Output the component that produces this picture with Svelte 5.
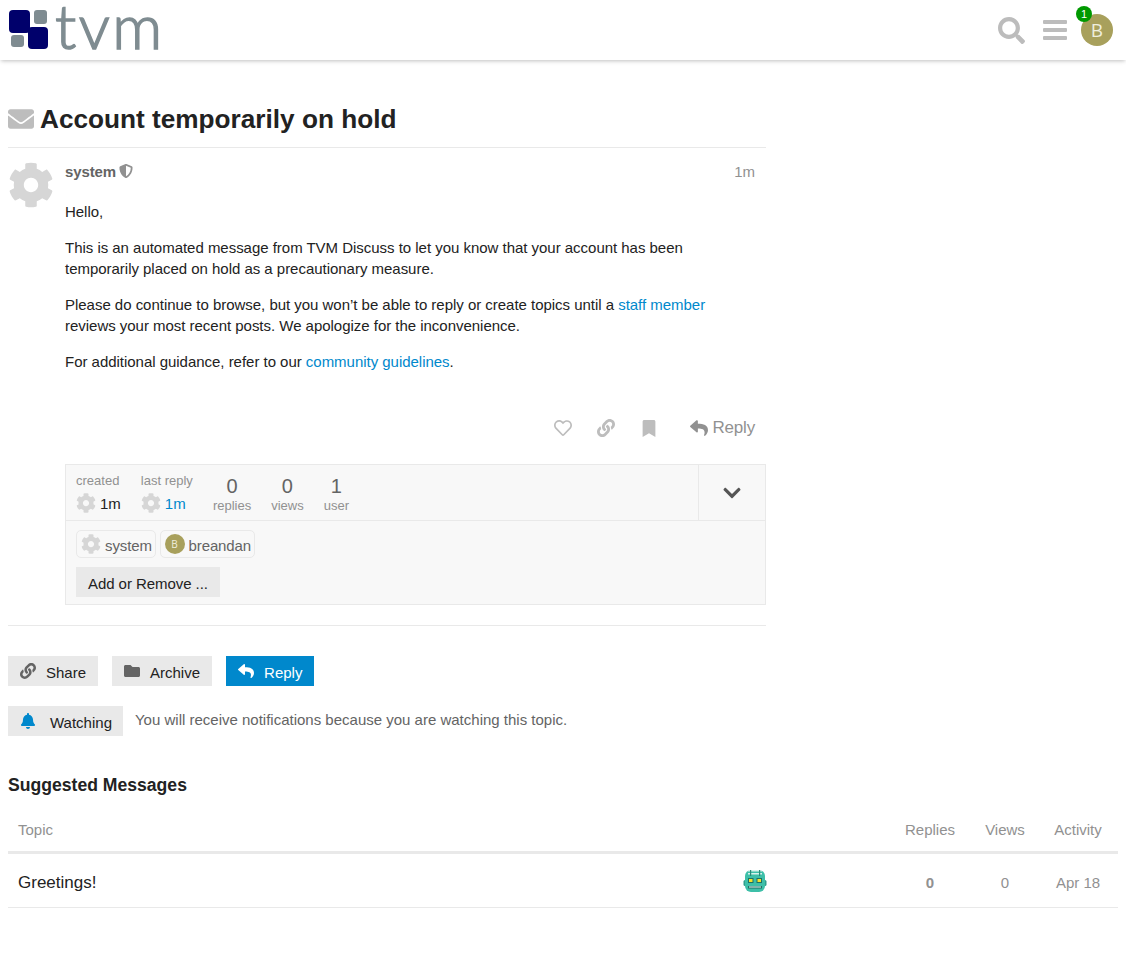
<script>
	const headers = ['Replies', 'Views', 'Activity'];
</script>

<svg class="defs" aria-hidden="true">
	<symbol id="cog" viewBox="0 0 512 512"><path d="M487.4 315.7l-42.6-24.6c4.3-23.2 4.3-47 0-70.2l42.6-24.6c4.9-2.8 7.1-8.6 5.5-14-11.1-35.6-30-67.8-54.7-94.6-3.8-4.1-10-5.1-14.8-2.3L380.8 110c-17.9-15.4-38.5-27.3-60.8-35.1V25.8c0-5.6-3.9-10.5-9.4-11.7-36.7-8.2-74.3-7.8-109.2 0-5.5 1.2-9.4 6.1-9.4 11.7V75c-22.2 7.9-42.8 19.8-60.8 35.1L88.7 85.5c-4.9-2.8-11-1.9-14.8 2.3-24.7 26.7-43.6 58.9-54.7 94.6-1.7 5.4.6 11.2 5.5 14L67.3 221c-4.3 23.2-4.3 47 0 70.2l-42.6 24.6c-4.9 2.8-7.1 8.6-5.5 14 11.1 35.6 30 67.8 54.7 94.6 3.8 4.1 10 5.1 14.8 2.3l42.6-24.6c17.9 15.4 38.5 27.3 60.8 35.1v49.2c0 5.6 3.9 10.5 9.4 11.7 36.7 8.2 74.3 7.8 109.2 0 5.5-1.2 9.4-6.1 9.4-11.7v-49.2c22.2-7.9 42.8-19.8 60.8-35.1l42.6 24.6c4.9 2.8 11 1.9 14.8-2.3 24.7-26.7 43.6-58.9 54.7-94.6 1.5-5.5-.7-11.3-5.6-14.1zM256 336c-44.1 0-80-35.9-80-80s35.9-80 80-80 80 35.9 80 80-35.9 80-80 80z"/></symbol>
	<symbol id="reply" viewBox="0 0 512 512"><path d="M8.309 189.836L184.313 37.851C199.719 24.546 224 35.347 224 56.015v80.053c160.629 1.839 288 34.032 288 186.258 0 61.441-39.581 122.309-83.333 154.132-13.653 9.931-33.111-2.533-28.077-18.631 45.344-145.012-21.507-183.51-176.59-185.742V360c0 20.7-24.3 31.453-39.687 18.164l-176.004-152c-11.071-9.562-11.086-26.753 0-36.328z"/></symbol>
	<symbol id="link" viewBox="0 0 512 512"><path d="M326.612 185.391c59.747 59.809 58.927 155.698.36 214.59-.11.12-.24.25-.36.37l-67.2 67.2c-59.27 59.27-155.699 59.262-214.96 0-59.27-59.26-59.27-155.7 0-214.96l37.106-37.106c9.84-9.84 26.786-3.3 27.294 10.606.648 17.722 3.826 35.527 9.69 52.721 1.986 5.822.567 12.262-3.783 16.612l-13.087 13.087c-28.026 28.026-28.905 73.66-1.155 101.96 28.024 28.579 74.086 28.749 102.325.51l67.2-67.19c28.191-28.191 28.073-73.757 0-101.83-3.701-3.694-7.429-6.564-10.341-8.569a16.037 16.037 0 0 1-6.947-12.606c-.396-10.567 3.348-21.456 11.698-29.806l21.054-21.055c5.521-5.521 14.182-6.199 20.584-1.731a152.482 152.482 0 0 1 20.522 17.197zM467.547 44.449c-59.261-59.262-155.69-59.27-214.96 0l-67.2 67.2c-.12.12-.25.25-.36.37-58.566 58.892-59.387 154.781.36 214.59a152.454 152.454 0 0 0 20.521 17.196c6.402 4.468 15.064 3.789 20.584-1.731l21.054-21.055c8.35-8.35 12.094-19.239 11.698-29.806a16.037 16.037 0 0 0-6.947-12.606c-2.912-2.005-6.64-4.875-10.341-8.569-28.073-28.073-28.191-73.639 0-101.83l67.2-67.19c28.239-28.239 74.3-28.069 102.325.51 27.75 28.3 26.872 73.934-1.155 101.96l-13.087 13.087c-4.35 4.35-5.769 10.79-3.783 16.612 5.864 17.194 9.042 34.999 9.69 52.721.509 13.906 17.454 20.446 27.294 10.606l37.106-37.106c59.271-59.259 59.271-155.699.001-214.959z"/></symbol>
</svg>

<header class="header">
	<a class="logo" href="#top">
		<svg class="logo-mark" viewBox="0 0 40 40" width="40" height="40">
			<rect x="0" y="0" width="21" height="23" rx="4" fill="#00006b"/>
			<rect x="25" y="0" width="13" height="14" rx="3" fill="#7f8c91"/>
			<rect x="2" y="25" width="13" height="12" rx="3" fill="#7f8c91"/>
			<rect x="19" y="17" width="20" height="22" rx="4" fill="#00006b"/>
		</svg>
		<span class="logo-text">tvm</span>
	</a>
	<div class="header-icons">
		<svg class="header-icon" viewBox="0 0 512 512"><path d="M505 442.7L405.3 343c-4.5-4.5-10.6-7-17-7H372c27.6-35.3 44-79.7 44-128C416 93.1 322.9 0 208 0S0 93.1 0 208s93.1 208 208 208c48.3 0 92.7-16.4 128-44v16.3c0 6.4 2.5 12.5 7 17l99.7 99.7c9.4 9.4 24.6 9.4 33.9 0l28.3-28.3c9.4-9.4 9.4-24.6.1-34zM208 336c-70.7 0-128-57.2-128-128 0-70.7 57.2-128 128-128 70.7 0 128 57.2 128 128 0 70.7-57.2 128-128 128z"/></svg>
		<svg class="header-icon bars" viewBox="0 0 24 20"><rect y="0" width="24" height="4" rx="1"/><rect y="8" width="24" height="4" rx="1"/><rect y="16" width="24" height="4" rx="1"/></svg>
		<div class="user">
			<span class="avatar-letter big">B</span>
			<span class="badge">1</span>
		</div>
	</div>
</header>

<main class="main">
	<h1 class="title">
		<svg class="title-icon" viewBox="0 64 512 384"><path d="M502.3 190.8c3.9-3.1 9.7-.2 9.7 4.7V400c0 26.5-21.5 48-48 48H48c-26.5 0-48-21.5-48-48V195.6c0-5 5.7-7.8 9.7-4.7 22.4 17.4 52.1 39.5 154.1 113.6 21.1 15.4 56.7 47.8 92.2 47.6 35.7.3 72-32.8 92.3-47.6 102-74.1 131.6-96.3 154-113.7zM256 320c23.2.4 56.6-29.2 73.4-41.4 132.7-96.3 142.8-104.7 173.4-128.7 5.8-4.5 9.2-11.5 9.2-18.9v-19c0-26.5-21.5-48-48-48H48C21.5 64 0 85.5 0 112v19c0 7.4 3.4 14.3 9.2 18.9 30.6 23.9 40.7 32.4 173.4 128.7 16.8 12.2 50.2 41.8 73.4 41.4z"/></svg>
		Account temporarily on hold
	</h1>

	<article class="post">
		<svg class="post-avatar"><use href="#cog"/></svg>
		<div class="post-body">
			<div class="post-meta">
				<span class="username">system</span>
				<svg class="shield" viewBox="0 0 512 512"><path d="M466.5 83.7l-192-80a48.15 48.15 0 0 0-36.9 0l-192 80C27.7 91.1 16 108.6 16 128c0 198.5 114.5 335.7 221.5 380.3 11.8 4.9 25.1 4.9 36.9 0C360.1 472.6 496 349.3 496 128c0-19.4-11.7-36.9-29.5-44.3zM256.1 446.3l-.1-381 175.9 73.3c-3.3 151.4-82.1 261.1-175.8 307.7z"/></svg>
				<span class="post-date">1m</span>
			</div>
			<div class="cooked">
				<p>Hello,</p>
				<p>This is an automated message from TVM Discuss to let you know that your account has been temporarily placed on hold as a precautionary measure.</p>
				<p>Please do continue to browse, but you won’t be able to reply or create topics until a <a href="#staff">staff member</a> reviews your most recent posts. We apologize for the inconvenience.</p>
				<p>For additional guidance, refer to our <a href="#guidelines">community guidelines</a>.</p>
			</div>
			<div class="post-actions">
				<svg class="action heart" viewBox="0 0 512 512"><path d="M458.4 64.3C400.6 15.7 311.3 23 256 79.3 200.7 23 111.4 15.6 53.6 64.3-21.6 127.6-10.6 230.8 43 285.5l175.4 178.7c10 10.2 23.4 15.9 37.6 15.9 14.3 0 27.6-5.6 37.6-15.8L469 285.6c53.5-54.7 64.7-157.9-10.6-221.3zm-23.6 187.5L259.4 430.5c-2.4 2.4-4.4 2.4-6.8 0L77.2 251.8c-36.5-37.2-43.9-107.6 7.3-150.7 38.9-32.7 98.9-27.8 136.5 10.5l35 35.7 35-35.7c37.8-38.5 97.8-43.2 136.5-10.6 51.1 43.1 43.5 113.9 7.3 150.8z"/></svg>
				<svg class="action link"><use href="#link"/></svg>
				<svg class="action bookmark" viewBox="0 0 384 512"><path d="M0 512V48C0 21.49 21.49 0 48 0h288c26.51 0 48 21.49 48 48v464L192 400 0 512z"/></svg>
				<span class="reply-action">
					<svg class="action reply-icon"><use href="#reply"/></svg>
					Reply
				</span>
			</div>
			<div class="map">
				<div class="map-top">
					<div class="map-stats">
						<div class="stat-when">
							<span class="stat-label">created</span>
							<span class="when"><svg class="mini-cog"><use href="#cog"/></svg>1m</span>
						</div>
						<div class="stat-when">
							<span class="stat-label">last reply</span>
							<span class="when accent"><svg class="mini-cog"><use href="#cog"/></svg>1m</span>
						</div>
						<div class="stat"><span class="num">0</span><span class="stat-label">replies</span></div>
						<div class="stat"><span class="num">0</span><span class="stat-label">views</span></div>
						<div class="stat"><span class="num">1</span><span class="stat-label">user</span></div>
					</div>
					<div class="map-toggle">
						<svg class="chevron" viewBox="0 0 448 512"><path d="M207.029 381.476L12.686 187.132c-9.373-9.373-9.373-24.569 0-33.941l22.667-22.667c9.357-9.357 24.522-9.375 33.901-.04L224 284.505l154.745-154.021c9.379-9.335 24.544-9.317 33.901.04l22.667 22.667c9.373 9.373 9.373 24.569 0 33.941L240.971 381.476c-9.373 9.372-24.569 9.372-33.942 0z"/></svg>
					</div>
				</div>
				<div class="map-bottom">
					<div class="participants">
						<span class="chip"><svg class="chip-cog"><use href="#cog"/></svg>system</span>
						<span class="chip"><span class="avatar-letter small">B</span>breandan</span>
					</div>
					<button class="btn add">Add or Remove ...</button>
				</div>
			</div>
		</div>
	</article>

	<div class="controls">
		<div class="buttons">
			<button class="btn"><svg class="btn-icon"><use href="#link"/></svg>Share</button>
			<button class="btn"><svg class="btn-icon" viewBox="0 0 512 512"><path d="M464 128H272l-64-64H48C21.49 64 0 85.49 0 112v288c0 26.51 21.49 48 48 48h416c26.51 0 48-21.49 48-48V176c0-26.51-21.49-48-48-48z"/></svg>Archive</button>
			<button class="btn primary"><svg class="btn-icon"><use href="#reply"/></svg>Reply</button>
		</div>
		<div class="notify">
			<button class="btn watching"><svg class="btn-icon bell" viewBox="0 0 448 512"><path d="M224 512c35.32 0 63.97-28.65 63.97-64H160.03c0 35.35 28.65 64 63.97 64zm215.39-149.71c-19.32-20.76-55.47-51.99-55.47-154.29 0-77.7-54.48-139.9-127.94-155.16V32c0-17.67-14.32-32-31.98-32s-31.98 14.33-31.98 32v20.84C118.56 68.1 64.08 130.3 64.08 208c0 102.3-36.15 133.53-55.47 154.29-6 6.45-8.66 14.16-8.61 21.71.11 16.4 12.98 32 32.1 32h383.8c19.12 0 32-15.6 32.1-32 .05-7.55-2.61-15.27-8.61-21.71z"/></svg>Watching</button>
			<span class="notify-text">You will receive notifications because you are watching this topic.</span>
		</div>
	</div>
</main>

<section class="suggested">
	<h2 class="suggested-title">Suggested Messages</h2>
	<table class="topics">
		<thead>
			<tr>
				<th class="col-topic">Topic</th>
				<th class="col-poster"></th>
				{#each headers as h}
					<th class="col-num">{h}</th>
				{/each}
			</tr>
		</thead>
		<tbody>
			<tr>
				<td class="col-topic topic-link">Greetings!</td>
				<td class="col-poster">
					<svg class="robot" viewBox="0 0 24 24" width="24" height="24">
						<rect x="0.5" y="11" width="3" height="6" rx="1.5" fill="#2f9e8c"/>
						<rect x="20.5" y="11" width="3" height="6" rx="1.5" fill="#2f9e8c"/>
						<rect x="2" y="1" width="20" height="22" rx="6" fill="#3dbfa8"/>
						<rect x="5" y="1" width="14" height="1.5" fill="#d8f2ec"/>
						<rect x="5" y="4" width="14" height="1.5" fill="#d8f2ec"/>
						<rect x="7" y="1" width="1.2" height="6" fill="#2a8a7a"/>
						<rect x="16" y="1" width="1.2" height="6" fill="#2a8a7a"/>
						<rect x="5" y="9" width="5.5" height="5" fill="#1f6f63"/>
						<rect x="13.5" y="9" width="5.5" height="5" fill="#1f6f63"/>
						<rect x="6" y="10" width="3.5" height="3" fill="#f6e32b"/>
						<rect x="14.5" y="10" width="3.5" height="3" fill="#f6e32b"/>
						<rect x="5" y="17" width="14" height="2.5" fill="#1f6f63"/>
						<rect x="6" y="17.5" width="12" height="1" fill="#e8f6f3"/>
					</svg>
				</td>
				<td class="col-num bold">0</td>
				<td class="col-num">0</td>
				<td class="col-num">Apr 18</td>
			</tr>
		</tbody>
	</table>
</section>

<style>
	:global(body) {
		margin: 0;
		background: #fff;
		color: #222;
		font-family: "Liberation Sans", Arial, sans-serif;
		font-size: 14px;
	}

	.defs {
		position: absolute;
		width: 0;
		height: 0;
	}

	.header {
		display: flex;
		justify-content: space-between;
		align-items: center;
		height: 60px;
		padding: 0 13px 0 9px;
		box-shadow: 0 2px 4px -1px rgba(0, 0, 0, .25);
		box-sizing: border-box;
	}

	.logo {
		display: flex;
		align-items: center;
		text-decoration: none;
	}

	.logo-text {
		margin-left: 6px;
		padding-bottom: 10px;
		font-family: Lato, sans-serif;
		font-weight: 300;
		font-size: 62px;
		line-height: 48px;
		letter-spacing: 2.5px;
		-webkit-text-stroke: 1.5px #7f8c91;
		color: #7f8c91;
	}

	.header-icons {
		display: flex;
		align-items: center;
	}

	.header-icon {
		width: 27px;
		height: 27px;
		fill: #bcbcbc;
	}

	.header-icon.bars {
		width: 24px;
		height: 20px;
		margin-left: 18px;
		margin-right: 14px;
	}

	.user {
		position: relative;
		width: 32px;
		height: 32px;
	}

	.avatar-letter {
		display: flex;
		align-items: center;
		justify-content: center;
		border-radius: 50%;
		background: #a8a05c;
		color: #efeedd;
		font-family: "Open Sans", sans-serif;
	}

	.avatar-letter.big {
		width: 32px;
		height: 32px;
		font-size: 19px;
	}

	.avatar-letter.small {
		width: 20px;
		height: 20px;
		font-size: 10px;
		margin-top: -2px;
		margin-right: 4px;
	}

	.badge {
		position: absolute;
		top: -8px;
		left: -5px;
		width: 16px;
		height: 16px;
		border-radius: 50%;
		background: #009900;
		color: #fff;
		font-size: 11px;
		line-height: 16px;
		text-align: center;
	}

	.main {
		width: 758px;
		margin-left: 8px;
	}

	.title {
		display: flex;
		align-items: center;
		margin: 0;
		padding: 42px 0 11px;
		height: 34px;
		font-size: 26.2px;
		line-height: 34px;
		font-weight: 700;
		color: #222;
		border-bottom: 1px solid #e9e9e9;
	}

	.title-icon {
		width: 26px;
		height: 20px;
		margin-right: 6px;
		fill: #bdbdbd;
	}

	.post {
		display: flex;
		padding-top: 14px;
		padding-bottom: 20px;
		border-bottom: 1px solid #e9e9e9;
	}

	.post-avatar {
		flex: none;
		width: 46px;
		height: 46px;
		fill: #d6d6d6;
	}

	.post-body {
		flex: 1;
		margin-left: 11px;
	}

	.post-meta {
		display: flex;
		align-items: center;
		padding-right: 11px;
		height: 18px;
	}

	.username {
		font-weight: 700;
		color: #646464;
		font-size: 15px;
		letter-spacing: -.1px;
	}

	.shield {
		width: 14px;
		height: 14px;
		margin-left: 3px;
		fill: #919191;
	}

	.post-date {
		margin-left: auto;
		font-size: 15px;
		color: #919191;
	}

	.cooked {
		margin-top: 21px;
		padding-right: 50px;
		font-size: 15px;
		line-height: 21px;
		letter-spacing: -.025px;
		color: #222;
	}

	.cooked p {
		margin: 0 0 15px;
	}

	.cooked a {
		color: #0088cc;
		text-decoration: none;
	}

	.post-actions {
		display: flex;
		align-items: center;
		justify-content: flex-end;
		margin-top: 41px;
		height: 30px;
		padding-right: 11px;
	}

	.action {
		width: 18px;
		height: 18px;
		fill: #bdbdbd;
	}

	.link {
		margin-left: 25px;
	}

	.bookmark {
		margin-left: 25px;
		height: 17px;
	}

	.reply-action {
		display: flex;
		align-items: center;
		margin-left: 32px;
		font-size: 17px;
		letter-spacing: -.2px;
		color: #919191;
	}

	.reply-icon {
		fill: #919191;
		margin-right: 5px;
	}

	.map {
		margin-top: 21px;
		background: #f8f8f8;
		border: 1px solid #e9e9e9;
	}

	.map-top {
		display: flex;
		height: 55px;
		border-bottom: 1px solid #e9e9e9;
	}

	.map-stats {
		flex: 1;
		display: flex;
		padding: 8px 10px 0;
	}

	.stat-when {
		display: flex;
		flex-direction: column;
		margin-right: 20px;
	}

	.stat-label {
		font-size: 13px;
		line-height: 15px;
		color: #919191;
	}

	.when {
		display: flex;
		align-items: center;
		margin-top: 5px;
		font-size: 15px;
		color: #222;
	}

	.when.accent {
		color: #0088cc;
	}

	.mini-cog {
		width: 20px;
		height: 20px;
		margin-right: 4px;
		fill: #d6d6d6;
	}

	.stat {
		display: flex;
		flex-direction: column;
		align-items: center;
		margin-top: 1px;
		margin-right: 20px;
	}

	.num {
		font-size: 20px;
		line-height: 24px;
		color: #646464;
	}

	.map-toggle {
		display: flex;
		align-items: center;
		justify-content: center;
		width: 66px;
		border-left: 1px solid #e9e9e9;
	}

	.chevron {
		width: 18px;
		height: 20px;
		fill: #555;
	}

	.map-bottom {
		padding: 9px 10px 7px;
	}

	.participants {
		display: flex;
		gap: 3.6px;
	}

	.chip {
		display: flex;
		align-items: center;
		height: 24px;
		padding: 2px 3px 0 4px;
		border: 1px solid #e9e9e9;
		border-radius: 5px;
		font-size: 15px;
		letter-spacing: -.1px;
		color: #646464;
	}

	.chip-cog {
		width: 20px;
		height: 20px;
		margin-top: -2px;
		margin-right: 4px;
		fill: #d6d6d6;
	}

	.btn {
		display: inline-flex;
		align-items: center;
		box-sizing: border-box;
		height: 30px;
		padding: 2px 12px 0;
		border: 0;
		background: #e9e9e9;
		color: #222;
		font-family: inherit;
		font-size: 15px;
	}

	.btn.add {
		margin-top: 9px;
		letter-spacing: -.06px;
	}

	.btn-icon {
		width: 16px;
		height: 16px;
		margin-top: -2px;
		margin-right: 10px;
		fill: #646464;
	}

	.btn.primary {
		background: #0088cc;
		color: #fff;
	}

	.btn.primary .btn-icon {
		fill: #fff;
	}

	.btn-icon.bell {
		fill: #0088cc;
		margin-right: 14px;
	}

	.btn.watching {
		padding-right: 11px;
	}

	.controls {
		padding-top: 30px;
	}

	.buttons {
		display: flex;
		gap: 14px;
	}

	.notify {
		display: flex;
		align-items: center;
		margin-top: 20px;
	}

	.notify-text {
		margin-left: 12px;
		margin-top: -3px;
		color: #646464;
		font-size: 15px;
	}

	.suggested {
		padding: 38px 8px 0;
	}

	.suggested-title {
		margin: 0;
		font-size: 17.6px;
		line-height: 22px;
		font-weight: 700;
		color: #222;
	}

	.topics {
		width: 100%;
		margin-top: 12px;
		border-collapse: collapse;
		font-size: 15px;
	}

	.topics th {
		height: 43px;
		padding: 0 10px;
		font-weight: 400;
		text-align: center;
		color: #919191;
		border-bottom: 3px solid #e9e9e9;
	}

	.topics th.col-topic {
		text-align: left;
	}

	.topics td {
		height: 49px;
		padding: 4px 10px 0;
		text-align: center;
		color: #919191;
		border-bottom: 1px solid #e9e9e9;
	}

	.topics td.col-topic {
		text-align: left;
	}

	.topics th:last-child,
	.topics td:last-child {
		padding-right: 14.5px;
		width: 51px;
	}

	.topic-link {
		font-size: 17px;
		color: #222 !important;
	}

	.topics th.col-poster,
	.topics td.col-poster {
		width: 150px;
		padding: 0;
	}

	.col-num {
		width: 55px;
	}

	.bold {
		font-weight: 700;
	}

	.robot {
		display: block;
	}
</style>
